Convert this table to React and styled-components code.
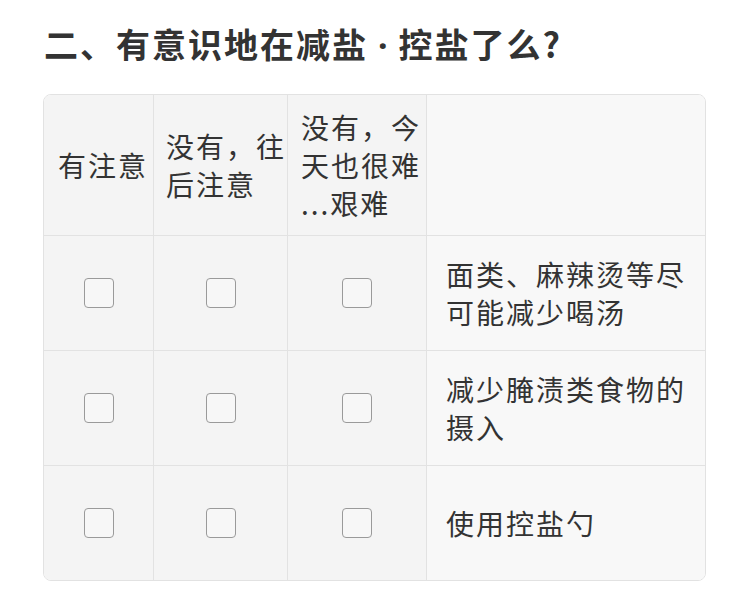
import React from "react";
import styled, { createGlobalStyle } from "styled-components";

const GlobalStyle = createGlobalStyle`
  body {
    margin: 0;
    background: #ffffff;
    font-family: "Noto Sans CJK SC", "Noto Sans", sans-serif;
    color: #333333;
  }
`;

const Page = styled.div`
  padding: 18px 46px 0 43px;
`;

const Title = styled.h2`
  margin: 0 0 25px 1px;
  height: 51px;
  font-size: 34px;
  line-height: 51px;
  font-weight: 700;
  letter-spacing: 2px;
  color: #333333;
`;

const Dot = styled.span`
  font-family: "Noto Sans", sans-serif;
  font-weight: 700;
  letter-spacing: 0;
  padding: 0 11px 0 10px;
`;

const Table = styled.div`
  display: grid;
  grid-template-columns: 110px 134px 139px 1fr;
  grid-template-rows: 141px 115px 115px 114px;
  width: 661px;
  border: 1px solid #e2e2e2;
  border-radius: 8px;
  overflow: hidden;
`;

const Cell = styled.div`
  display: flex;
  align-items: center;
  justify-content: ${(p) => (p.center ? "center" : "flex-start")};
  padding: ${(p) => p.pad || "0"};
  background: ${(p) => (p.wide ? "#f8f8f8" : "#f4f4f4")};
  border-right: ${(p) => (p.last ? "none" : "1px solid #e2e2e2")};
  border-bottom: ${(p) => (p.bottom ? "none" : "1px solid #e2e2e2")};
  font-size: 28px;
  line-height: 38px;
  letter-spacing: 2px;
  line-break: anywhere;
  color: #333333;
`;

const Box = styled.span`
  display: block;
  width: 30px;
  height: 30px;
  box-sizing: border-box;
  border: 1.5px solid #9a9a9a;
  border-radius: 4px;
  background: #f7f7f7;
`;

const heads = [
  { text: "有注意", pad: "0 2px 0 14px" },
  { text: "没有，往后注意", pad: "0 0 0 12px" },
  { text: "没有，今天也很难...艰难", pad: "0 4px 0 13px" },
];
const rows = ["面类、麻辣烫等尽可能减少喝汤", "减少腌渍类食物的摄入", "使用控盐勺"];

export default function App() {
  return (
    <Page>
      <GlobalStyle />
      <Title>
        二、有意识地在减盐<Dot>·</Dot>控盐了么?
      </Title>
      <Table>
        {heads.map((h) => (
          <Cell key={h.text} pad={h.pad}>
            {h.text}
          </Cell>
        ))}
        <Cell wide last />
        {rows.map((r, ri) => {
          const bottom = ri === rows.length - 1;
          return (
            <React.Fragment key={r}>
              {heads.map((h) => (
                <Cell key={h.text} center bottom={bottom}>
                  <Box />
                </Cell>
              ))}
              <Cell wide last bottom={bottom} pad="0 12px 0 19px">
                {r}
              </Cell>
            </React.Fragment>
          );
        })}
      </Table>
    </Page>
  );
}
